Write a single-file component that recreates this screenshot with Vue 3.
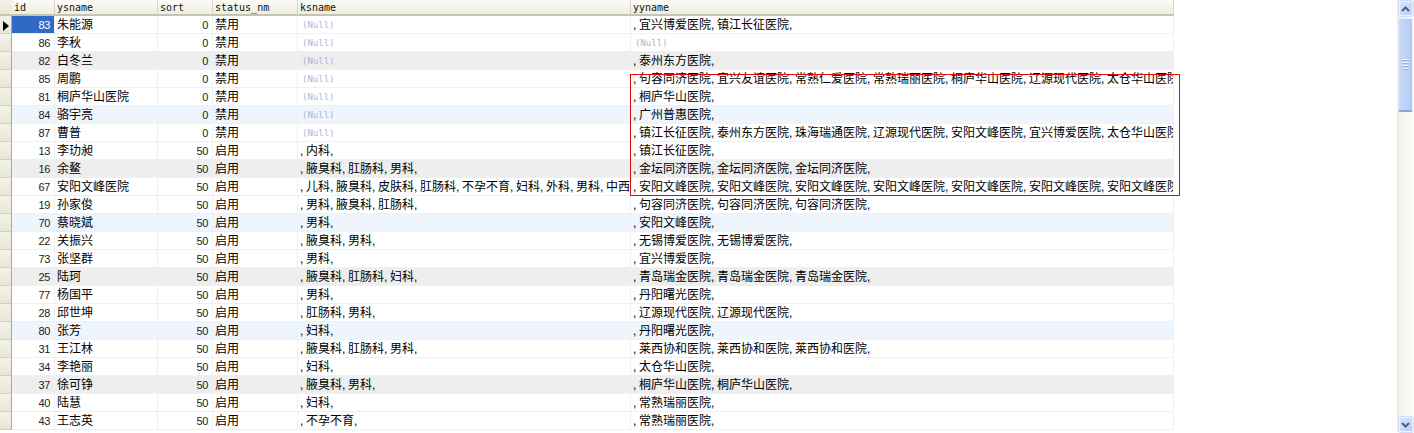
<script setup>
const h = (name, n = 1) => ', ' + Array(n).fill(name).join(', ') + ','
const rows = [
  [83, '朱能源', 0, '禁用', null, ', 宜兴博爱医院, 镇江长征医院,', ''],
  [86, '李秋', 0, '禁用', null, null, ''],
  [82, '白冬兰', 0, '禁用', null, h('泰州东方医院'), 'gray'],
  [85, '周鹏', 0, '禁用', null, ', 句容同济医院, 宜兴友谊医院, 常熟仁爱医院, 常熟瑞丽医院, 桐庐华山医院, 辽源现代医院, 太仓华山医院,', ''],
  [81, '桐庐华山医院', 0, '禁用', null, h('桐庐华山医院'), ''],
  [84, '骆宇亮', 0, '禁用', null, h('广州普惠医院'), 'blue'],
  [87, '曹普', 0, '禁用', null, ', 镇江长征医院, 泰州东方医院, 珠海瑞通医院, 辽源现代医院, 安阳文峰医院, 宜兴博爱医院, 太仓华山医院,', ''],
  [13, '李玏昶', 50, '启用', ', 内科,', h('镇江长征医院'), ''],
  [16, '余鳌', 50, '启用', ', 腋臭科, 肛肠科, 男科,', h('金坛同济医院', 3), 'gray'],
  [67, '安阳文峰医院', 50, '启用', ', 儿科, 腋臭科, 皮肤科, 肛肠科, 不孕不育, 妇科, 外科, 男科, 中西医科,', h('安阳文峰医院', 8), ''],
  [19, '孙家俊', 50, '启用', ', 男科, 腋臭科, 肛肠科,', h('句容同济医院', 3), ''],
  [70, '蔡晓斌', 50, '启用', ', 男科,', h('安阳文峰医院'), 'blue'],
  [22, '关振兴', 50, '启用', ', 腋臭科, 男科,', h('无锡博爱医院', 2), ''],
  [73, '张坚群', 50, '启用', ', 男科,', h('宜兴博爱医院'), ''],
  [25, '陆珂', 50, '启用', ', 腋臭科, 肛肠科, 妇科,', h('青岛瑞金医院', 3), 'gray'],
  [77, '杨国平', 50, '启用', ', 男科,', h('丹阳曙光医院'), ''],
  [28, '邱世坤', 50, '启用', ', 肛肠科, 男科,', h('辽源现代医院', 2), ''],
  [80, '张芳', 50, '启用', ', 妇科,', h('丹阳曙光医院'), 'blue'],
  [31, '王江林', 50, '启用', ', 腋臭科, 肛肠科, 男科,', h('莱西协和医院', 3), ''],
  [34, '李艳丽', 50, '启用', ', 妇科,', h('太仓华山医院'), ''],
  [37, '徐可铮', 50, '启用', ', 腋臭科, 男科,', h('桐庐华山医院', 2), 'gray'],
  [40, '陆慧', 50, '启用', ', 妇科,', h('常熟瑞丽医院'), ''],
  [43, '王志英', 50, '启用', ', 不孕不育,', h('常熟瑞丽医院'), '']
]
const cols = ['id', 'ysname', 'sort', 'status_nm', 'ksname', 'yyname']
</script>

<template>
  <div class="screen">
    <div class="table">
      <div class="row head">
        <div class="gut"></div>
        <div v-for="c in cols" :key="c" class="hc">{{ c }}</div>
      </div>
      <div v-for="(r, i) in rows" :key="r[0]" class="row" :class="r[6]">
        <div class="gut">
          <svg v-if="i === 0" class="mark" width="6" height="10" viewBox="0 0 6 10"><path d="M0 0L6 5L0 10Z" fill="#000" /></svg>
        </div>
        <div class="c num" :class="{ sel: i === 0 }">{{ r[0] }}</div>
        <div class="c txt">{{ r[1] }}</div>
        <div class="c num">{{ r[2] }}</div>
        <div class="c txt">{{ r[3] }}</div>
        <div class="c txt" :class="{ nul: r[4] === null }">{{ r[4] === null ? '(Null)' : r[4] }}</div>
        <div class="c txt" :class="{ nul: r[5] === null }">{{ r[5] === null ? '(Null)' : r[5] }}</div>
      </div>
    </div>
    <div class="blank"></div>
    <div class="sb">
      <div class="btn">
        <svg width="9" height="6" viewBox="0 0 9 6"><path d="M1 5L4.5 1.5L8 5" fill="none" stroke="#4d6185" stroke-width="2" /></svg>
      </div>
      <div class="thumb">
        <div class="grip"><i></i><i></i><i></i><i></i></div>
      </div>
      <div class="track"></div>
      <div class="btn">
        <svg width="9" height="6" viewBox="0 0 9 6"><path d="M1 1L4.5 4.5L8 1" fill="none" stroke="#4d6185" stroke-width="2" /></svg>
      </div>
    </div>
    <div class="mark-box"></div>
  </div>
</template>

<style scoped>
.screen {
  position: relative;
  display: flex;
  width: 1414px;
  height: 433px;
  overflow: hidden;
  background: #fff;
}
.table { width: 1174px; flex: none; }
.blank { flex: 1; }
.row {
  display: grid;
  grid-template-columns: 12px 43px 103px 55px 85px 333px 543px;
  height: 18px;
}
.row.head { height: 16px; }
.row.gray .c { background: #eeeeee; }
.row.blue .c { background: #eef5fd; }
.gut {
  position: relative;
  background: linear-gradient(#f4f3ea, #e9e6d6);
  border-right: 1px solid #aca899;
  border-bottom: 1px solid #d4d0c0;
  box-sizing: border-box;
}
.head .gut { border-bottom: 2px solid #c6c3b3; border-right: 0; }
.mark { position: absolute; left: 3px; top: 5px; }
.hc {
  box-sizing: border-box;
  padding: 1px 0 0 2px;
  font: 10px/14px "DejaVu Sans Mono", monospace;
  color: #111;
  background: linear-gradient(#fbfbf7, #efeddf);
  border-right: 1px solid #d8d5c6;
  border-bottom: 2px solid #c6c3b3;
  white-space: nowrap;
  overflow: hidden;
}
.hc:first-of-type { padding-left: 3px; letter-spacing: 1px; }
.c {
  box-sizing: border-box;
  border-right: 1px solid #f0f0f0;
  border-bottom: 1px solid #f0f0f0;
  white-space: nowrap;
  overflow: hidden;
  color: #000;
}
.txt {
  padding-left: 2px;
  font: 12px/19px "Liberation Sans", "Noto Sans CJK SC", sans-serif;
  word-spacing: -0.67px;
}
.num {
  text-align: right;
  padding-right: 4px;
  font: 11px/19px "Liberation Sans", sans-serif;
  letter-spacing: -0.4px;
  color: #222;
}
.sel { background: #316ac5; color: #fff; }
.nul {
  font: 9px/19px "DejaVu Sans Mono", monospace;
  color: #aab6d0;
  padding-left: 4px;
  word-spacing: 0;
}
.sb {
  width: 17px;
  flex: none;
  display: flex;
  flex-direction: column;
  box-sizing: border-box;
  height: 432px;
  background: linear-gradient(90deg, #eeede5, #f7f6f1 40%, #fcfcfa);
  padding: 1px 1px 0 1px;
  align-items: center;
}
.btn {
  width: 14px;
  height: 15px;
  flex: none;
  display: flex;
  align-items: center;
  justify-content: center;
  box-sizing: border-box;
  background: linear-gradient(135deg, #dbe6fb, #b8cdf6);
  border: 1px solid #eef3fc;
  border-radius: 2px;
  box-shadow: 0 0 0 1px #cfdcf5;
}
.thumb {
  width: 15px;
  height: 94px;
  margin-top: 2px;
  flex: none;
  display: flex;
  align-items: center;
  justify-content: center;
  box-sizing: border-box;
  background: linear-gradient(90deg, #c8d8fa, #bdd0f8 60%, #b5c9f5);
  border: 1px solid #e8effc;
  border-bottom: 2px solid #8aa6e2;
  border-radius: 2px;
}
.grip { display: flex; flex-direction: column; gap: 1px; }
.grip i { display: block; width: 7px; height: 1px; background: #eef3fe; border-bottom: 1px solid #93aeea; }
.track { flex: 1; }
.mark-box {
  position: absolute;
  left: 630px;
  top: 74px;
  width: 550px;
  height: 122px;
  box-sizing: border-box;
  border: 1px solid #e00a0a;
}
</style>
